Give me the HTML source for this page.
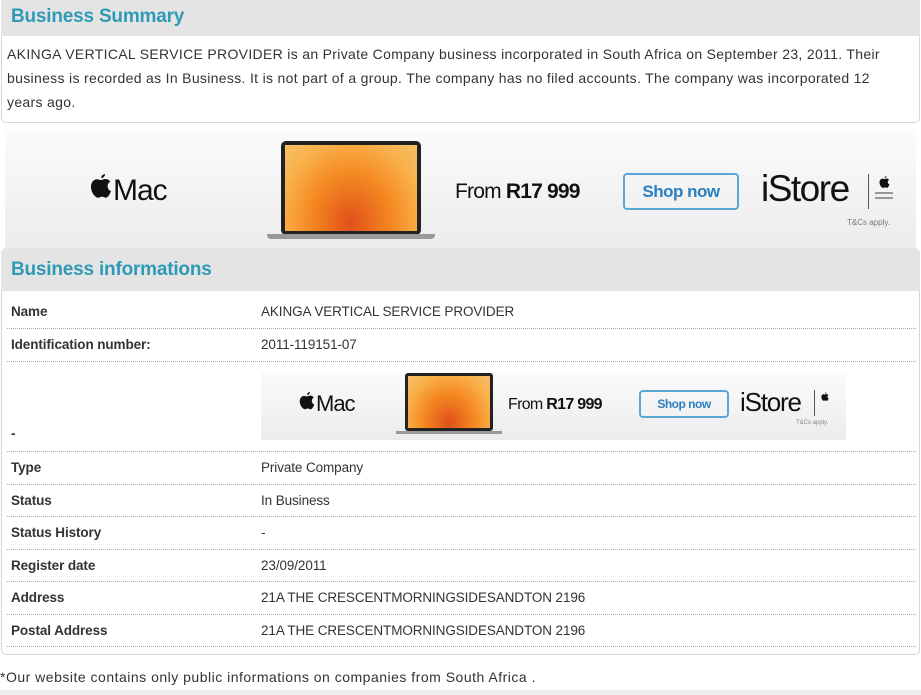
<!DOCTYPE html>
<html><head><meta charset="utf-8"><style>
*{margin:0;padding:0;box-sizing:border-box}
body{width:921px;height:695px;background:#fff;font-family:"Liberation Sans",sans-serif;color:#333;position:relative;overflow:hidden}
.hd{position:absolute;left:1px;right:1px;background:#e4e4e4;color:#2f9ab6;font-weight:bold;font-size:19px;padding-left:10px;letter-spacing:-0.2px}
.p{position:absolute;left:7px;top:42px;width:895px;font-size:14px;line-height:24px;letter-spacing:0.32px;color:#333}
.card{position:absolute;left:1px;right:1px;border:1px solid #d6d6d6;border-top:none;border-radius:0 0 5px 5px}
.ad{position:absolute;background:linear-gradient(#fbfbfb,#ececec);overflow:hidden}
.row{position:absolute;left:7px;right:5px;border-bottom:1px dotted #aaa;font-size:13.5px;letter-spacing:-0.1px}
.row b{position:absolute;left:4px;font-weight:bold;color:#333}
.row span{position:absolute;left:254px;color:#333}
.mac{position:absolute;font-family:"Liberation Sans",sans-serif;color:#111;white-space:nowrap}
.btn{position:absolute;border:2px solid #5aa7d6;border-radius:4px;color:#2a7fc0;font-weight:bold;text-align:center;letter-spacing:-0.5px}
svg.ap{display:inline-block;vertical-align:baseline;margin-right:1px}
</style></head><body>
<div class="hd" style="top:0;height:36px;line-height:34px">Business Summary</div>
<div class="card" style="top:36px;height:87px"></div>
<div class="p">AKINGA VERTICAL SERVICE PROVIDER is an Private Company business incorporated in South Africa on September 23, 2011. Their business is recorded as In Business. It is not part of a group. The company has no filed accounts. The company was incorporated 12 years ago.</div>

<div class="ad" style="left:5px;top:130px;width:911px;height:118px">
 <div class="mac" style="left:85px;top:44px;font-size:30px;letter-spacing:-1px"><svg class="ap" width="22" height="26" viewBox="0 0 22 26"><path d="M15 0c0 2-1.5 4-3.8 4.2C11 2 12.8.3 15 0zM11 6c1.2 0 2.6-1 4.3-1 1 0 3.5.3 5 2.6-4 2.4-3.3 8 .7 9.5-.9 2.6-3 6.600-5 6.6-1.6 0-2-1-3.9-1s-2.5 1-4 1C5.6 23.7 1 19 1 12.7 1 8.2 4 5.3 7 5.3c1.6 0 3 1 4 .7z" fill="#111"/></svg>Mac</div>
 <div style="position:absolute;left:276px;top:11px;width:140px;height:94px;background:#222;border-radius:5px;padding:4px"><div style="width:100%;height:100%;background:radial-gradient(ellipse at 50% 90%,#e0501a,#f58a22 45%,#f9b04a 75%,#f7c068)"></div></div>
 <div style="position:absolute;left:262px;top:104px;width:168px;height:5px;background:#9a9a9a;border-radius:0 0 4px 4px"></div>
 <div class="mac" style="left:450px;top:50px;font-size:21px;letter-spacing:-0.8px">From <b>R17 999</b></div>
 <div class="btn" style="left:618px;top:43px;width:116px;height:37px;line-height:33px;font-size:17px">Shop now</div>
 <div class="mac" style="left:756px;top:38px;font-size:37px;letter-spacing:-1.5px">iStore</div>
 <div style="position:absolute;left:863px;top:44px;width:1px;height:35px;background:#555"></div>
 <svg style="position:absolute;left:874px;top:46px" width="11" height="13" viewBox="0 0 22 26"><path d="M15 0c0 2-1.5 4-3.8 4.2C11 2 12.8.3 15 0zM11 6c1.2 0 2.6-1 4.3-1 1 0 3.5.3 5 2.6-4 2.4-3.3 8 .7 9.5-.9 2.6-3 6.6-5 6.6-1.6 0-2-1-3.9-1s-2.5 1-4 1C5.6 23.7 1 19 1 12.7 1 8.2 4 5.3 7 5.3c1.6 0 3 1 4 .7z" fill="#111"/></svg>
 <div style="position:absolute;left:870px;top:62px;width:18px;height:2px;background:#999"></div>
 <div style="position:absolute;left:870px;top:67px;width:18px;height:2px;background:#999"></div>
 <div style="position:absolute;left:842px;top:88px;font-size:8px;color:#777">T&amp;Cs apply.</div>
</div>

<div class="hd" style="top:248px;height:43px;line-height:44px;border-radius:5px 5px 0 0">Business informations</div>
<div class="card" style="top:291px;height:364px"></div>

<div class="row" style="top:296px;height:33px"><b style="top:8px">Name</b><span style="top:8px">AKINGA VERTICAL SERVICE PROVIDER</span></div>
<div class="row" style="top:329px;height:33px"><b style="top:8px">Identification number:</b><span style="top:8px">2011-119151-07</span></div>
<div class="row" style="top:362px;height:90px"><b style="top:64px">-</b></div>
<div class="ad" style="left:261px;top:372px;width:585px;height:68px">
 <div class="mac" style="left:38px;top:19px;font-size:22px;letter-spacing:-1px"><svg class="ap" width="16" height="19" viewBox="0 0 22 26"><path d="M15 0c0 2-1.5 4-3.8 4.2C11 2 12.8.3 15 0zM11 6c1.2 0 2.6-1 4.3-1 1 0 3.5.3 5 2.6-4 2.4-3.3 8 .7 9.5-.9 2.6-3 6.6-5 6.6-1.6 0-2-1-3.9-1s-2.5 1-4 1C5.6 23.7 1 19 1 12.7 1 8.2 4 5.3 7 5.3c1.6 0 3 1 4 .7z" fill="#111"/></svg>Mac</div>
 <div style="position:absolute;left:144px;top:1px;width:88px;height:58px;background:#222;border-radius:3px;padding:3px"><div style="width:100%;height:100%;background:radial-gradient(ellipse at 50% 90%,#e0501a,#f58a22 45%,#f9b04a 75%,#f7c068)"></div></div>
 <div style="position:absolute;left:135px;top:59px;width:106px;height:3px;background:#999"></div>
 <div class="mac" style="left:247px;top:24px;font-size:16px;letter-spacing:-0.7px">From <b>R17 999</b></div>
 <div class="btn" style="left:378px;top:18px;width:90px;height:28px;line-height:24px;font-size:12px">Shop now</div>
 <div class="mac" style="left:479px;top:15px;font-size:26px;letter-spacing:-1.2px">iStore</div>
 <div style="position:absolute;left:553px;top:18px;width:1px;height:26px;background:#555"></div>
 <svg style="position:absolute;left:560px;top:20px" width="8" height="10" viewBox="0 0 22 26"><path d="M15 0c0 2-1.5 4-3.8 4.2C11 2 12.8.3 15 0zM11 6c1.2 0 2.6-1 4.3-1 1 0 3.5.3 5 2.6-4 2.4-3.3 8 .7 9.5-.9 2.6-3 6.6-5 6.6-1.6 0-2-1-3.9-1s-2.5 1-4 1C5.6 23.7 1 19 1 12.7 1 8.2 4 5.3 7 5.3c1.6 0 3 1 4 .7z" fill="#111"/></svg>
 <div style="position:absolute;left:535px;top:48px;font-size:6px;color:#888">T&amp;Cs apply.</div>
</div>
<div class="row" style="top:452px;height:33px"><b style="top:8px">Type</b><span style="top:8px">Private Company</span></div>
<div class="row" style="top:485px;height:32px"><b style="top:8px">Status</b><span style="top:8px">In Business</span></div>
<div class="row" style="top:517px;height:33px"><b style="top:8px">Status History</b><span style="top:8px">-</span></div>
<div class="row" style="top:550px;height:32px"><b style="top:8px">Register date</b><span style="top:8px">23/09/2011</span></div>
<div class="row" style="top:582px;height:33px"><b style="top:8px">Address</b><span style="top:8px">21A THE CRESCENTMORNINGSIDESANDTON 2196</span></div>
<div class="row" style="top:615px;height:32px"><b style="top:8px">Postal Address</b><span style="top:8px">21A THE CRESCENTMORNINGSIDESANDTON 2196</span></div>

<div style="position:absolute;left:0;top:669px;font-size:14px;letter-spacing:0.5px;color:#333">*Our website contains only public informations on companies from South Africa .</div>
<div style="position:absolute;left:0;right:0;top:690px;height:5px;background:#ececec"></div>
</body></html>
